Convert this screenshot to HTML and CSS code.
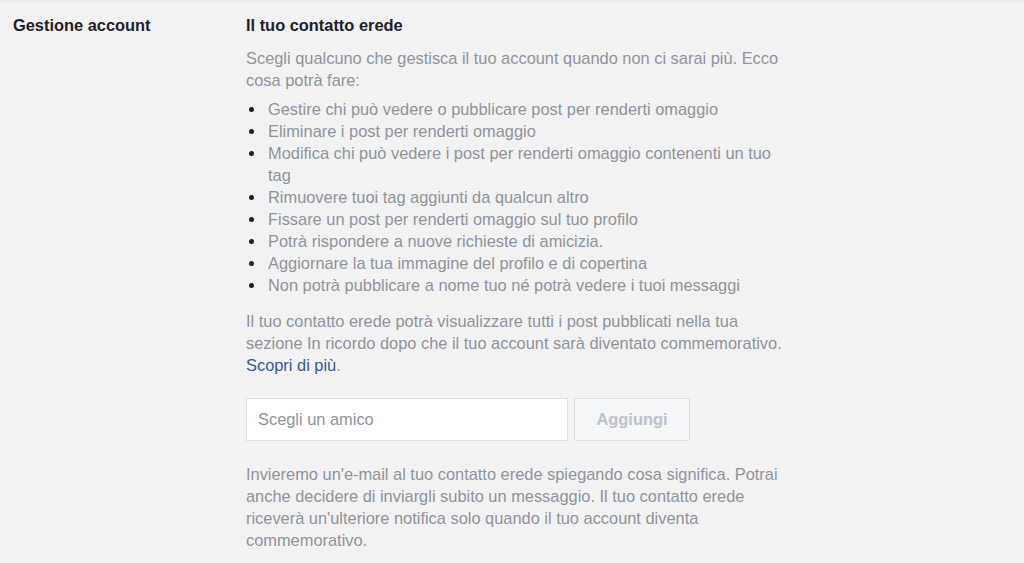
FILE: index.html
```html
<!DOCTYPE html>
<html lang="it">
<head>
<meta charset="utf-8">
<title>Gestione account</title>
<link rel="stylesheet" href="styles.css">
</head>
<body>
<div class="page">
  <div class="row">
    <div class="label">Gestione account</div>
    <div class="content">
      <h3 class="title">Il tuo contatto erede</h3>
      <p class="text intro">Scegli qualcuno che gestisca il tuo account quando non ci sarai più. Ecco cosa potrà fare:</p>
      <ul class="list">
        <li>Gestire chi può vedere o pubblicare post per renderti omaggio</li>
        <li>Eliminare i post per renderti omaggio</li>
        <li>Modifica chi può vedere i post per renderti omaggio contenenti un tuo tag</li>
        <li>Rimuovere tuoi tag aggiunti da qualcun altro</li>
        <li>Fissare un post per renderti omaggio sul tuo profilo</li>
        <li>Potrà rispondere a nuove richieste di amicizia.</li>
        <li>Aggiornare la tua immagine del profilo e di copertina</li>
        <li>Non potrà pubblicare a nome tuo né potrà vedere i tuoi messaggi</li>
      </ul>
      <p class="text after-list">Il tuo contatto erede potrà visualizzare tutti i post pubblicati nella tua <span class="nowrap">sezione In ricordo</span> dopo che il tuo account sarà diventato commemorativo. <a class="link" href="#">Scopri di più</a>.</p>
      <div class="picker">
        <input class="friend-input" type="text" placeholder="Scegli un amico">
        <button class="add-btn" type="button" disabled>Aggiungi</button>
      </div>
      <p class="text note">Invieremo un'e-mail al tuo contatto erede spiegando cosa significa. Potrai anche decidere di inviargli subito un messaggio. Il tuo contatto erede riceverà un'ulteriore notifica solo quando il tuo account diventa commemorativo.</p>
    </div>
  </div>
</div>
</body>
</html>
```

FILE: styles.css
```css
html, body {
  margin: 0;
  padding: 0;
  background: #f2f2f2;
}
body {
  font-family: "Liberation Sans", Arial, sans-serif;
  font-size: 16.4px;
  line-height: 22px;
  color: #1d2129;
}
.page {
  border-top: 2px solid #e9eaed;
  min-height: 561px;
}
.row {
  display: flex;
  padding-top: 12px;
}
.label {
  width: 233px;
  padding-left: 13px;
  font-weight: bold;
  color: #1d2129;
}
.content {
  width: 540px;
}
.title {
  margin: 0;
  font-size: 16.4px;
  line-height: 22px;
  font-weight: bold;
  color: #1d2129;
}
.text {
  margin: 0;
  color: #90949c;
}
.intro {
  margin-top: 11px;
}
.list {
  list-style: none;
  margin: 7px 0 0 0;
  padding: 0;
  color: #90949c;
}
.list li {
  position: relative;
  padding-left: 22px;
}
.list li::before {
  content: "";
  position: absolute;
  left: 3px;
  top: 9px;
  width: 5px;
  height: 5px;
  border-radius: 50%;
  background: #1d2129;
}
.after-list {
  margin-top: 14px;
}
.nowrap {
  white-space: nowrap;
}
.link {
  color: #365899;
  text-decoration: none;
}
.picker {
  display: flex;
  gap: 6px;
  margin-top: 22px;
}
.friend-input {
  box-sizing: border-box;
  width: 322px;
  height: 43px;
  border: 1px solid #dddfe2;
  background: #fff;
  padding: 0 11px;
  font-family: inherit;
  font-size: 16.4px;
  color: #1d2129;
  outline: none;
}
.friend-input::placeholder {
  color: #8d949e;
}
.add-btn {
  box-sizing: border-box;
  width: 116px;
  height: 43px;
  border: 1px solid #dddfe2;
  border-radius: 2px;
  background: #f5f6f7;
  font-family: inherit;
  font-size: 16.4px;
  font-weight: bold;
  color: #bec3c9;
  padding: 0;
}
.note {
  margin-top: 22px;
}
```
